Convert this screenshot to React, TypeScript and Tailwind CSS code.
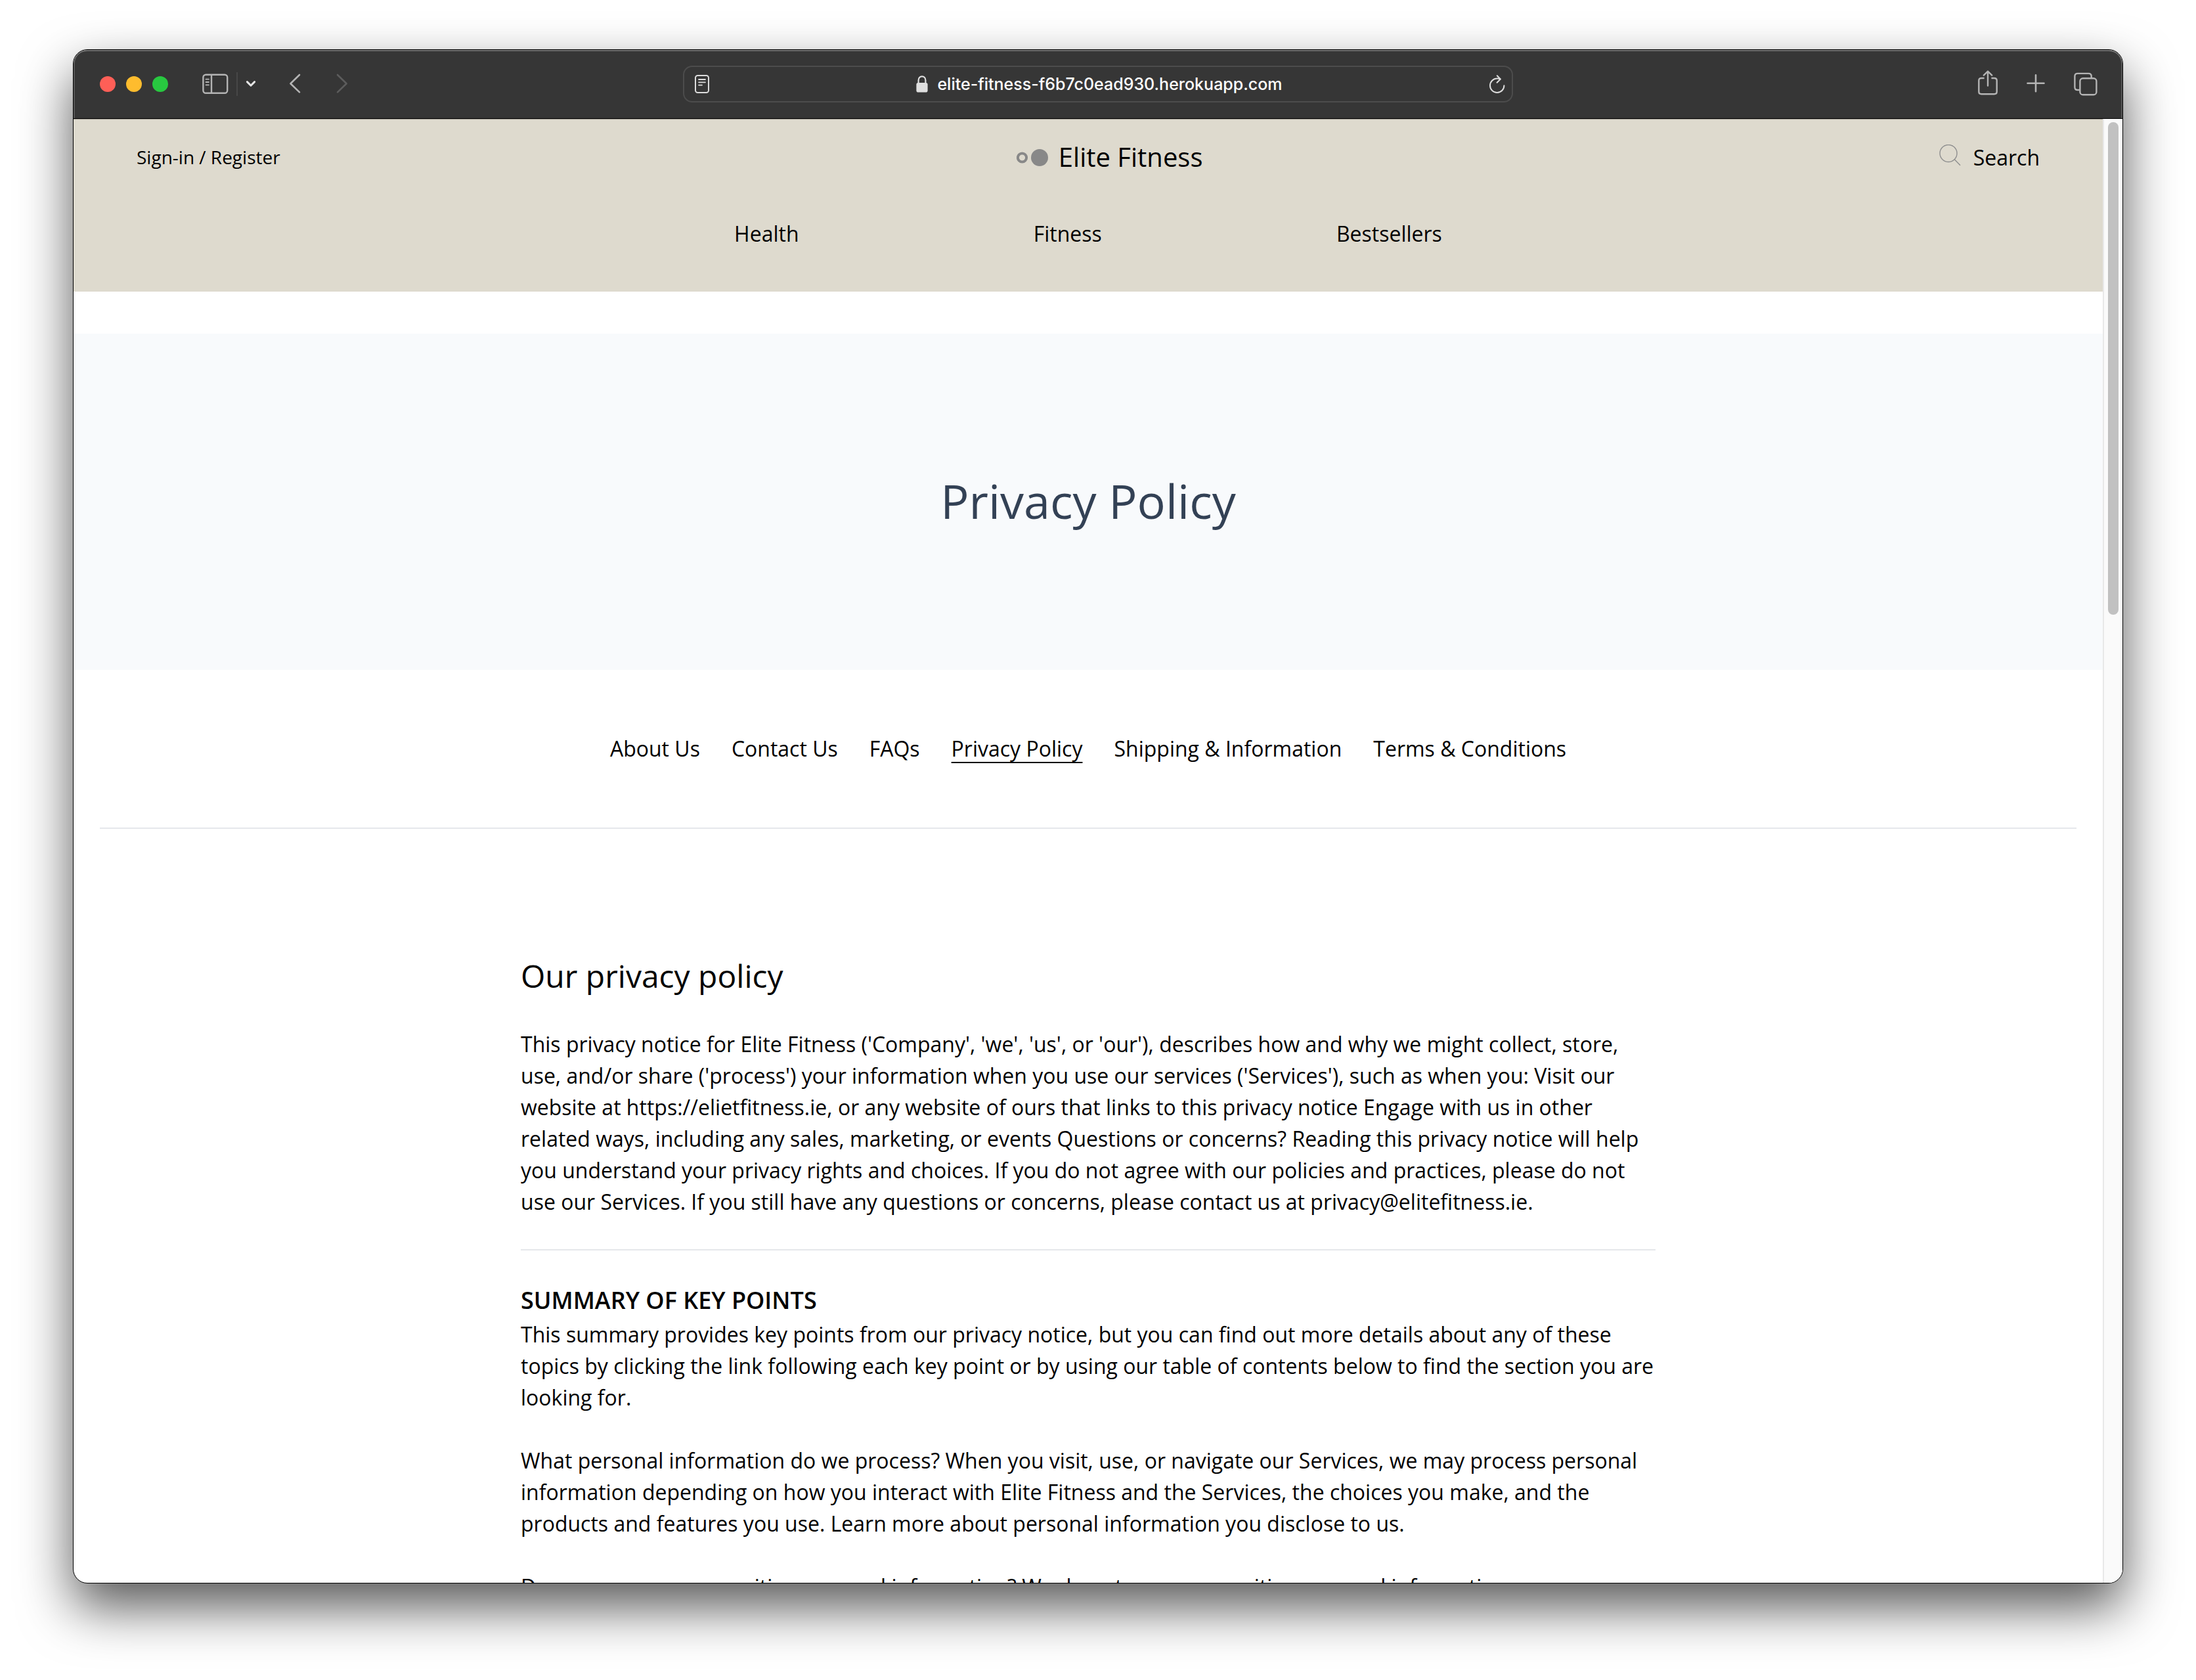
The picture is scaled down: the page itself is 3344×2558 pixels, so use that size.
import type { ReactNode } from "react";

const siteLinks = ["Health", "Fitness", "Bestsellers"];

const pageLinks = [
  "About Us",
  "Contact Us",
  "FAQs",
  "Privacy Policy",
  "Shipping & Information",
  "Terms & Conditions",
];

const keyPoints = [
  "This summary provides key points from our privacy notice, but you can find out more details about any of these topics by clicking the link following each key point or by using our table of contents below to find the section you are looking for.",
  "What personal information do we process? When you visit, use, or navigate our Services, we may process personal information depending on how you interact with Elite Fitness and the Services, the choices you make, and the products and features you use. Learn more about personal information you disclose to us.",
  "Do we process any sensitive personal information? We do not process sensitive personal information.",
];

function IconButton({ label, className, children }: { label: string; className?: string; children: ReactNode }) {
  return (
    <button type="button" aria-label={label} className={`flex shrink-0 items-center justify-center ${className ?? ""}`}>
      {children}
    </button>
  );
}

function SidebarIcon() {
  return (
    <svg width="40" height="32" viewBox="0 0 40 32" fill="none" stroke="currentColor" strokeWidth="2.4">
      <rect x="1.4" y="1.7" width="36.8" height="28" rx="4" />
      <path d="M14 1.7v28" />
      <path d="M5.5 8.7h4.4M5.5 13h4.4M5.5 17.3h4.4" strokeWidth="1.8" strokeLinecap="round" />
    </svg>
  );
}

function ReaderIcon() {
  return (
    <svg width="22" height="28" viewBox="0 0 22 28" fill="none" stroke="#dcdcdc" strokeWidth="2" strokeLinecap="round">
      <rect x="1" y="1" width="20" height="26" rx="3.5" />
      <path d="M6 7h10M6 11.3h10M6 15.6h5" strokeWidth="1.8" />
    </svg>
  );
}

function LockIcon() {
  return (
    <svg width="18" height="26" viewBox="0 0 18 26" fill="none">
      <path d="M3.6 12V7.2C3.6 3.6 5.8 1.3 9 1.3s5.4 2.3 5.4 5.9V12" stroke="#dfdfdf" strokeWidth="2.2" />
      <rect x="0.4" y="11" width="17.2" height="14.6" rx="2.8" fill="#dfdfdf" />
    </svg>
  );
}

function ReloadIcon() {
  return (
    <svg width="24" height="28" viewBox="0 0 24 28" fill="none" stroke="#dcdcdc" strokeWidth="2" strokeLinecap="round" strokeLinejoin="round">
      <path d="M22.4 16.2A10.7 10.7 0 1 1 11.7 5.6c1.8 0 3.2.2 4.8.8" />
      <path d="M11.8 1.2l5 5.3-5.2 5.2" />
    </svg>
  );
}

function ShareIcon() {
  return (
    <svg width="30" height="38" viewBox="0 0 30 38" fill="none" stroke="currentColor" strokeWidth="2.4" strokeLinecap="round" strokeLinejoin="round">
      <path d="M9.6 12H5.2C2.6 12 1.3 13.2 1.3 15.7v16.9c0 2.5 1.3 3.7 3.9 3.7h19.6c2.6 0 3.9-1.2 3.9-3.7V15.7c0-2.5-1.3-3.7-3.9-3.7h-4.4" strokeLinecap="butt" />
      <path d="M15 23.5V2M8.8 7.6L15 1.5l6.2 6.1" />
    </svg>
  );
}

function TabsIcon() {
  return (
    <svg width="36" height="36" viewBox="0 0 36 36" fill="none" stroke="currentColor" strokeWidth="2.4">
      <rect x="9.4" y="9.3" width="25" height="25" rx="4.4" />
      <path d="M9.4 27H5.8c-2.9 0-4.4-1.5-4.4-4.3V6.2c0-2.9 1.5-4.3 4.4-4.3h16.5c2.9 0 4.4 1.4 4.4 4.3v3.1" />
    </svg>
  );
}

function Toolbar() {
  return (
    <div className="flex h-[105px] shrink-0 items-center rounded-t-[21px] border-b border-black bg-[#363636] px-10 text-[#b4b4b4] shadow-[inset_0_2px_0_0_#6f6f6f,inset_2px_0_0_0_#545454,inset_-2px_0_0_0_#545454]">
      <div className="flex flex-1 items-center">
        <div className="flex gap-4">
          <button type="button" aria-label="Close window" className="size-6 rounded-full bg-[#ff5f57]" />
          <button type="button" aria-label="Minimise window" className="size-6 rounded-full bg-[#febc2e]" />
          <button type="button" aria-label="Zoom window" className="size-6 rounded-full bg-[#28c840]" />
        </div>
        <IconButton label="Show sidebar" className="ml-13">
          <SidebarIcon />
        </IconButton>
        <span className="ml-3 h-9 w-0.5 bg-[#474747]" />
        <IconButton label="Tab groups" className="ml-3 text-[#e6e6e6]">
          <svg width="16" height="12" viewBox="0 0 16 12" fill="none" stroke="currentColor" strokeWidth="3" strokeLinecap="round" strokeLinejoin="round">
            <path d="M2.4 2.6L8 8.2l5.6-5.6" />
          </svg>
        </IconButton>
        <IconButton label="Back" className="ml-12">
          <svg width="20" height="32" viewBox="0 0 20 32" fill="none" stroke="currentColor" strokeWidth="2.6" strokeLinecap="round" strokeLinejoin="round">
            <path d="M18 2L4.4 15.2L18 28.4" />
          </svg>
        </IconButton>
        <IconButton label="Forward" className="ml-13 text-[#5c5c5c]">
          <svg width="20" height="32" viewBox="0 0 20 32" fill="none" stroke="currentColor" strokeWidth="2.6" strokeLinecap="round" strokeLinejoin="round">
            <path d="M4 2l13.6 13.2L4 28.4" />
          </svg>
        </IconButton>
      </div>

      <div className="flex h-14 w-[1264px] shrink items-center rounded-[14px] border-2 border-[#4c4c4c] px-4">
        <IconButton label="Show reader">
          <ReaderIcon />
        </IconButton>
        <label className="flex flex-1 items-center justify-center gap-3.5">
          <LockIcon />
          <input
            aria-label="Address"
            defaultValue="elite-fitness-f6b7c0ead930.herokuapp.com"
            className="field-sizing-content bg-transparent font-[Inter,sans-serif] text-[25px] leading-8 font-medium text-white outline-none"
          />
        </label>
        <IconButton label="Reload page" className="-mr-1.5">
          <ReloadIcon />
        </IconButton>
      </div>

      <div className="flex flex-1 items-center justify-end gap-11">
        <IconButton label="Share" className="pb-1">
          <ShareIcon />
        </IconButton>
        <IconButton label="New tab">
          <svg width="28" height="32" viewBox="0 0 28 32" fill="none" stroke="currentColor" strokeWidth="2.6" strokeLinecap="round">
            <path d="M14 2.3v25M1.5 14.8h25" />
          </svg>
        </IconButton>
        <IconButton label="Show tab overview" className="-mr-0.5">
          <TabsIcon />
        </IconButton>
      </div>
    </div>
  );
}

function SiteHeader() {
  return (
    <header className="border-t border-[#a6a399] bg-[#dedace] pb-16">
      <div className="flex h-[116px] items-center justify-between px-24">
        <a href="#sign-in" className="pb-0.5 text-[28px] leading-10">
          Sign-in / Register
        </a>
        <a href="#home" className="flex items-center gap-4 text-[40px] leading-14">
          <svg width="48" height="26" viewBox="0 0 48 26">
            <circle cx="8.5" cy="13" r="6.6" fill="none" stroke="#888" strokeWidth="4" />
            <circle cx="35" cy="13" r="13" fill="#888" />
          </svg>
          <span className="pb-0.5">Elite Fitness</span>
        </a>
        <button type="button" className="flex items-center gap-4">
          <svg width="36" height="40" viewBox="0 0 36 40" fill="none" stroke="#8f8f8f" strokeWidth="1.4">
            <circle cx="14" cy="13.5" r="13" />
            <path d="M23 22.5l9 9.200" />
          </svg>
          Search
        </button>
      </div>
      <nav aria-label="Shop" className="mx-auto mt-[34px] flex max-w-[1792px] justify-evenly">
        {siteLinks.map((name) => (
          <a key={name} href={`#${name.toLowerCase()}`}>
            {name}
          </a>
        ))}
      </nav>
    </header>
  );
}

function Page() {
  return (
    <div className="min-w-0 flex-1 overflow-hidden font-['Open_Sans',sans-serif] text-[32px] leading-12 text-black">
      <SiteHeader />

      <div className="mt-16 flex h-128 items-center justify-center bg-[#f8fafc] pb-1">
        <h1 className="text-[72px] leading-20 text-[#334155]">Privacy Policy</h1>
      </div>

      <nav aria-label="Information" className="mx-10 flex justify-center gap-12 border-b-2 border-gray-200 py-24">
        {pageLinks.map((name) =>
          name === "Privacy Policy" ? (
            <a key={name} href="#privacy" aria-current="page" className="underline decoration-2 underline-offset-8">
              {name}
            </a>
          ) : (
            <a key={name} href="#info">
              {name}
            </a>
          ),
        )}
      </nav>

      <article className="mx-auto max-w-[1728px] py-48">
        <h2 className="text-5xl leading-16">Our privacy policy</h2>
        <p className="mt-12">
          This privacy notice for Elite Fitness ('Company', 'we', 'us', or 'our'), describes how and why we might
          collect, store, use, and/or share ('process') your information when you use our services ('Services'), such as
          when you: Visit our website at https://elietfitness.ie, or any website of ours that links to this privacy
          notice Engage with us in other related ways, including any sales, marketing, or events Questions or concerns?
          Reading this privacy notice will help you understand your privacy rights and choices. If you do not agree with
          our policies and practices, please do not use our Services. If you still have any questions or concerns,
          please contact us at privacy@elitefitness.ie.
        </p>
        <hr className="my-12 border-t-2 border-gray-200" />
        <h3 className="text-4xl leading-14 font-semibold">SUMMARY OF KEY POINTS</h3>
        <div className="flex flex-col gap-12">
          {keyPoints.map((text) => (
            <p key={text}>{text}</p>
          ))}
        </div>
      </article>
    </div>
  );
}

export default function App() {
  return (
    <div className="h-screen bg-white px-[111px] pt-[75px] pb-[147px]">
      <div className="flex h-full flex-col overflow-hidden rounded-[22px] border border-black bg-white shadow-[0_36px_80px_0_rgba(0,0,0,0.66)]">
        <Toolbar />
        <div className="flex min-h-0 flex-1">
          <Page />
          <div className="w-[30px] shrink-0 border-l-2 border-[#e8e8e8] bg-[#fafafa] pt-[5px] pl-1.5">
            <div className="h-[750px] w-4 rounded-full bg-[#c1c1c1]" />
          </div>
        </div>
      </div>
    </div>
  );
}
